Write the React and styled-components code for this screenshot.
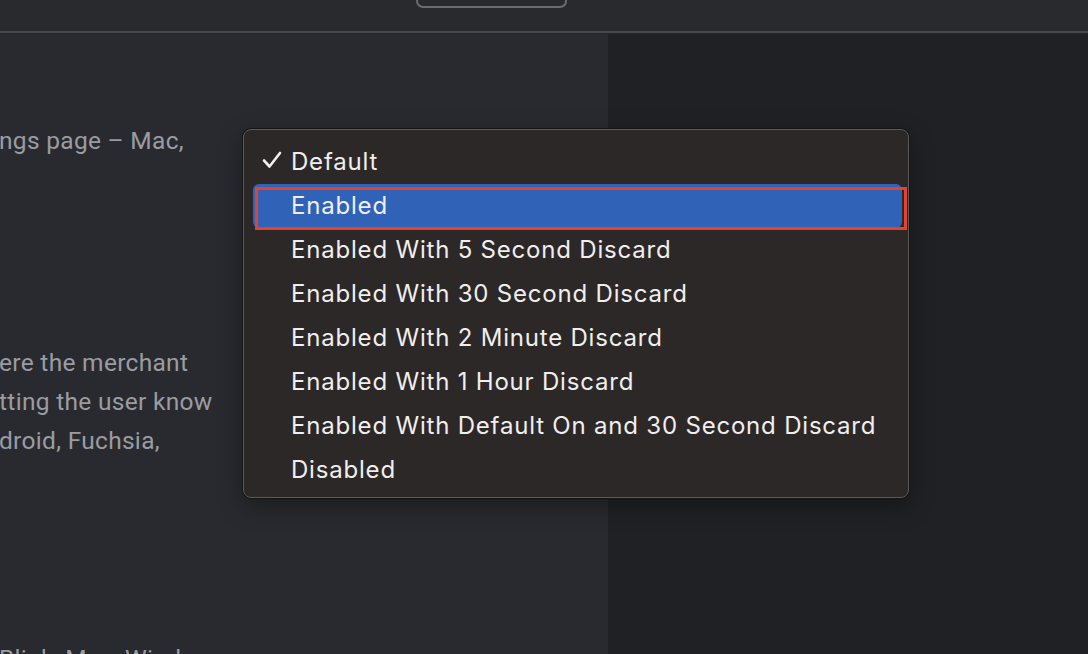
import React from 'react';
import styled, { createGlobalStyle } from 'styled-components';

const GlobalStyle = createGlobalStyle`
  html, body {
    margin: 0;
    padding: 0;
    width: 1088px;
    height: 654px;
    overflow: hidden;
    background: #202124;
  }
`;

const options = [
  'Default',
  'Enabled',
  'Enabled With 5 Second Discard',
  'Enabled With 30 Second Discard',
  'Enabled With 2 Minute Discard',
  'Enabled With 1 Hour Discard',
  'Enabled With Default On and 30 Second Discard',
  'Disabled',
];

export default function App() {
  return (
    <Page>
      <GlobalStyle />
      <TopBar>
        <TopButton />
      </TopBar>
      <Main>
        <LeftPane>
          <Para $top={87}>
            <Line>ngs page – Mac,</Line>
          </Para>
          <Para $top={183}>
            <Line>ere the merchant</Line>
            <Line>tting the user know</Line>
            <Line>droid, Fuchsia,</Line>
          </Para>
          <Para $top={179}>
            <Line>Blink, Mac, Windows,</Line>
          </Para>
        </LeftPane>
        <RightPane />
      </Main>

      <Menu>
        {options.map((label, i) => (
          <Item key={label} $active={i === 1}>
            <Check>
              {i === 0 && (
                <svg width="20" height="18" viewBox="0 0 20 18">
                  <path
                    d="M2 9.5 L7.5 15.5 L18 2"
                    fill="none"
                    stroke="#f0eeee"
                    strokeWidth="2.6"
                    strokeLinecap="round"
                    strokeLinejoin="round"
                  />
                </svg>
              )}
            </Check>
            {label}
            {i === 1 && <Annotation />}
          </Item>
        ))}
      </Menu>
    </Page>
  );
}

const Page = styled.div`
  position: relative;
  width: 1088px;
  height: 654px;
  overflow: hidden;
  display: flex;
  flex-direction: column;
  background: #202124;
`;

const TopBar = styled.div`
  position: relative;
  height: 31px;
  flex-shrink: 0;
  background: #292a2e;
  border-bottom: 2px solid #47484c;
`;

const TopButton = styled.div`
  position: absolute;
  left: 416px;
  top: -30px;
  width: 147px;
  height: 34px;
  border: 2px solid #6a6b70;
  border-radius: 7px;
`;

const Main = styled.div`
  flex: 1;
  display: flex;
  border-top: 1px solid #25262a;
`;

const LeftPane = styled.div`
  width: 608px;
  background: #292a2f;
  display: flex;
  flex-direction: column;
  overflow: hidden;
`;

const RightPane = styled.div`
  flex: 1;
  background: #202124;
`;

const Para = styled.div`
  margin-top: ${(p) => p.$top}px;
  margin-left: -1px;
  display: flex;
  flex-direction: column;
`;

const Line = styled.div`
  font-family: Roboto, 'Liberation Sans', sans-serif;
  font-size: 24.5px;
  letter-spacing: 0.3px;
  line-height: 39px;
  color: #9b9ca1;
  white-space: nowrap;
`;

const Menu = styled.div`
  position: absolute;
  left: 243px;
  top: 129px;
  width: 664px;
  padding: 10px 0 5px;
  background: #2c2827;
  border: 1px solid #5d5a59;
  border-radius: 8px;
  box-shadow: 0 0 0 1px #141414, 0 8px 24px rgba(0, 0, 0, 0.35);
  display: flex;
  flex-direction: column;
`;

const Item = styled.div`
  position: relative;
  height: 44px;
  margin: 0 6px 0 9px;
  padding-left: 9px;
  display: flex;
  align-items: center;
  border-radius: 6px;
  background: ${(p) => (p.$active ? '#3063b8' : 'transparent')};
  color: #f0eeee;
  font-family: Inter, 'Open Sans', sans-serif;
  font-size: 24px;
  letter-spacing: 0.8px;
  white-space: nowrap;
  padding-bottom: 2px;
  box-sizing: border-box;
`;

const Check = styled.span`
  width: 29px;
  display: flex;
  align-items: center;
  margin-top: -2px;
`;

const Annotation = styled.div`
  position: absolute;
  left: 2px;
  right: -5px;
  top: 3px;
  bottom: -2px;
  border: 3px solid #e5412c;
  pointer-events: none;
`;
